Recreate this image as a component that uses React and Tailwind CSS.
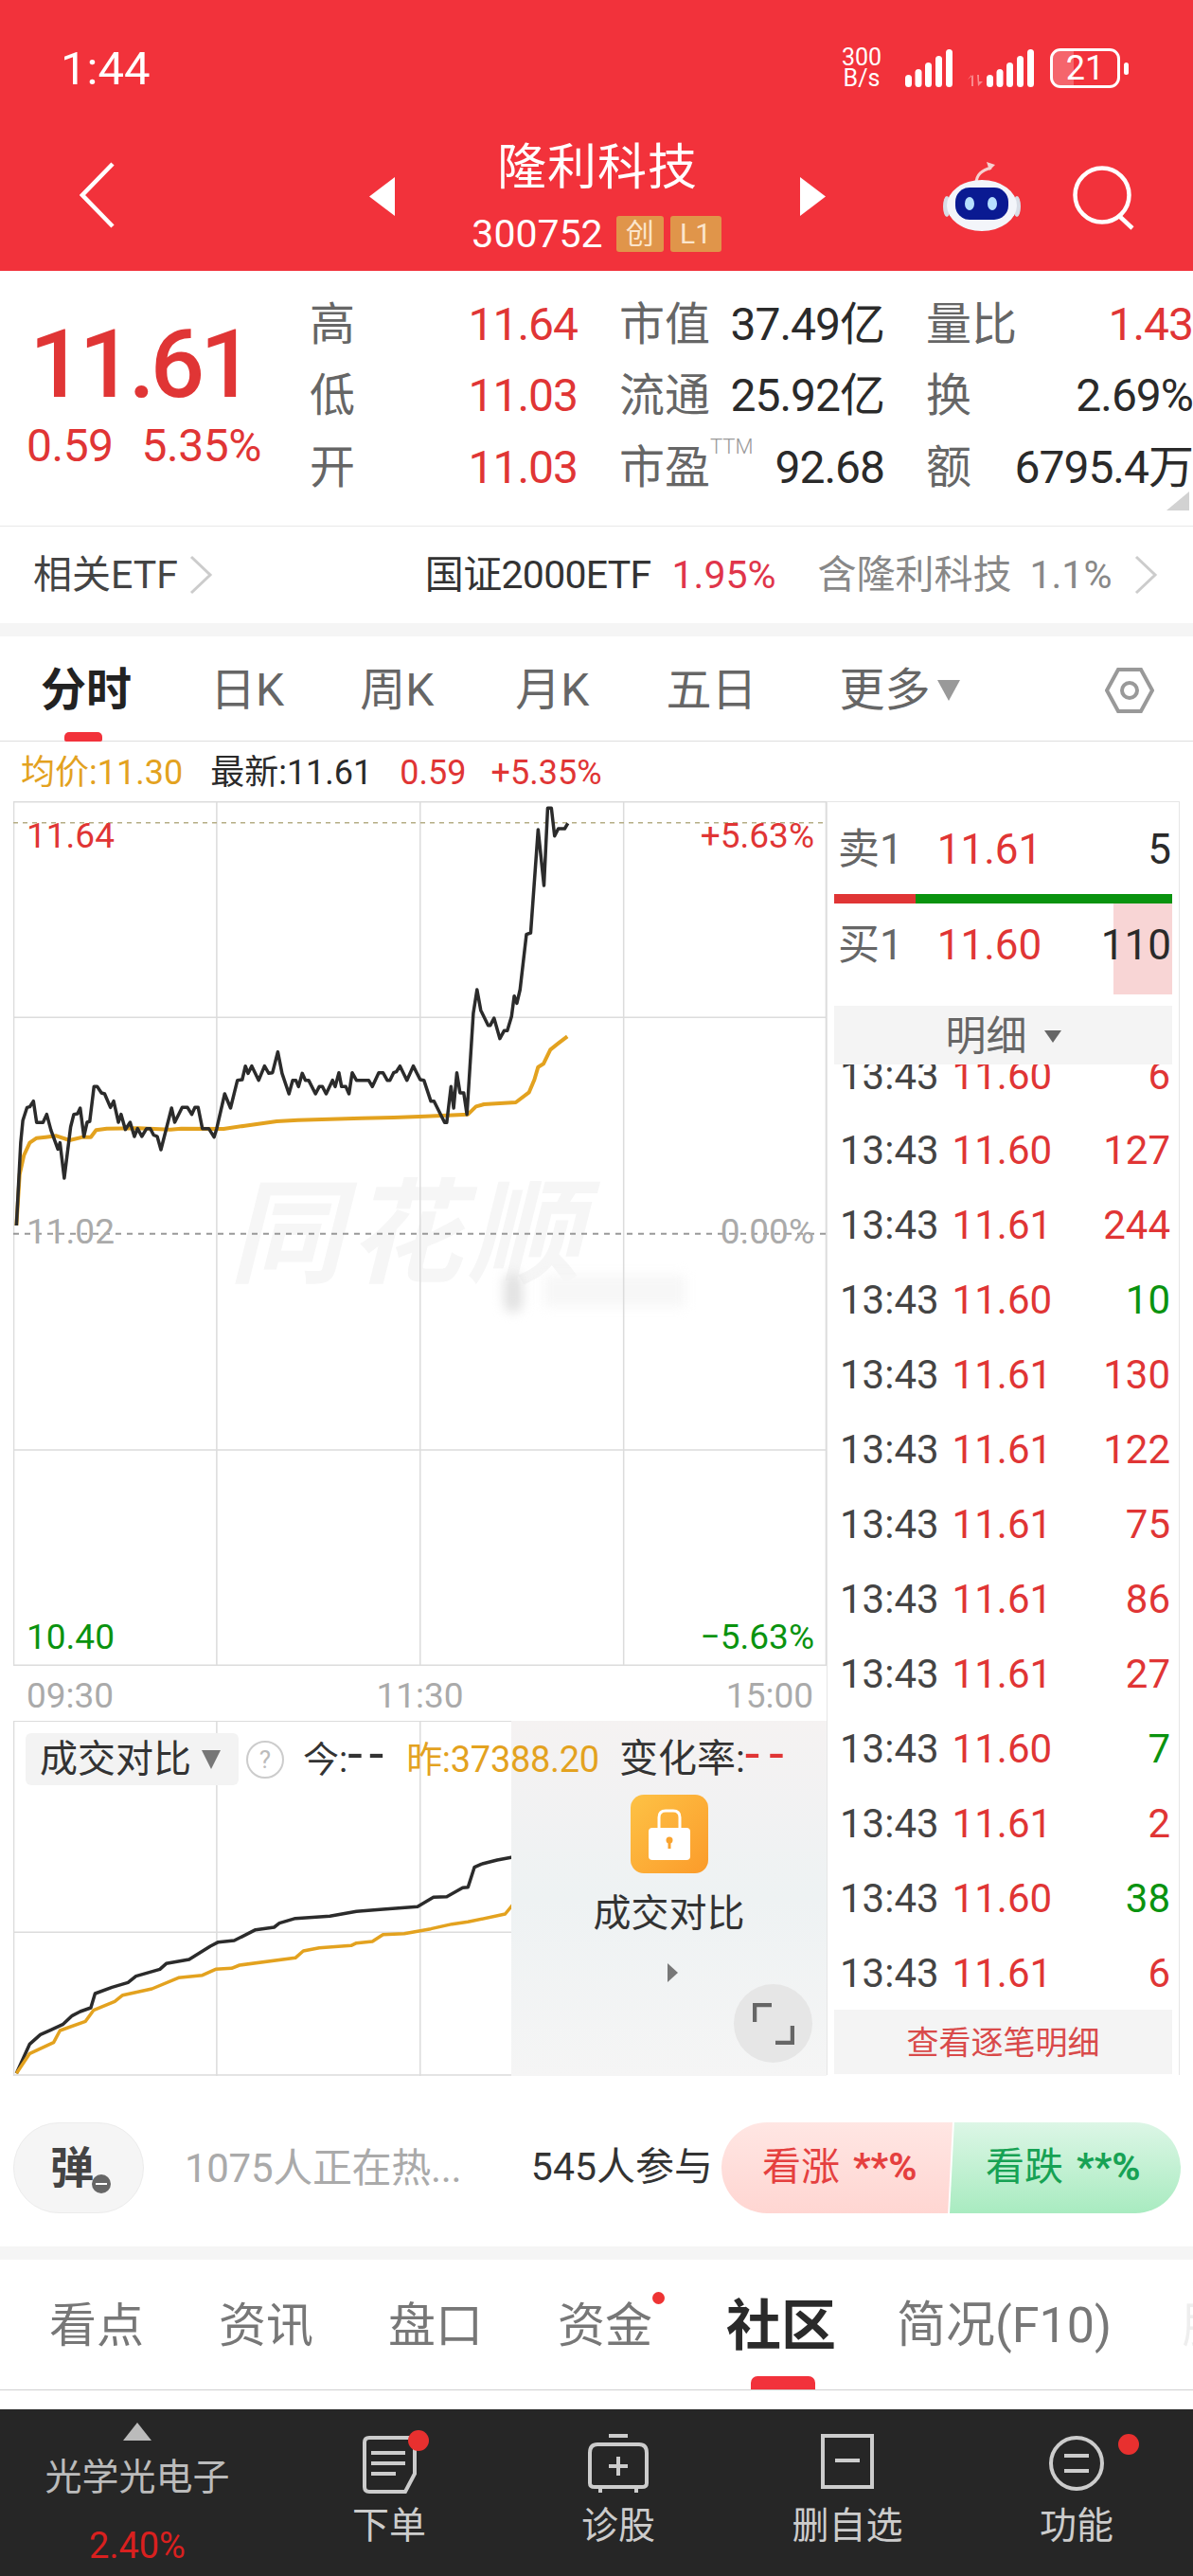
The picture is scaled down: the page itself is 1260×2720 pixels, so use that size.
import React from 'react'

const RED = 'text-[#e03535]'
const GREEN = 'text-[#0a930f]'

const blackLine = '30,1392 38,1130 42,1060 50,1018 55,1016 62,998 68,1066 80,1066 87,1040 95,1090 108,1150 112,1130 120,1242 132,1080 138,1040 145,1038 150,1020 157,1110 163,1065 168,1062 176,952 182,952 190,972 196,975 207,1018 213,998 222,1065 227,1040 235,1088 244,1065 252,1110 258,1085 266,1110 275,1085 282,1085 288,1105 295,1110 302,1152 322,1020 328,1065 342,1018 352,1018 360,1040 366,1018 372,1018 380,1085 392,1085 402,1112 407,1085 422,975 433,1020 446,932 455,930 461,887 466,910 473,887 486,932 497,887 505,910 512,908 522,842 530,910 543,975 550,932 556,932 561,952 568,910 574,932 580,932 593,975 600,952 606,952 613,975 625,932 630,952 637,908 642,952 650,952 656,975 662,908 670,932 693,932 700,952 712,908 720,908 728,932 733,932 740,908 745,905 752,887 765,932 777,887 790,930 797,932 810,998 816,998 836,1066 840,1066 848,952 853,1020 859,908 865,972 872,972 878,1040 890,720 897,645 904,710 918,758 922,758 929,735 940,800 948,775 954,775 962,730 967,665 972,688 978,645 990,470 998,465 1012,138 1023,315 1030,70 1037,70 1043,158 1050,135 1062,135 1068,118'
const goldLine = '30,1392 36,1230 44,1170 55,1130 68,1115 85,1112 105,1108 130,1122 155,1112 170,1112 180,1090 200,1085 260,1084 320,1088 340,1085 420,1086 460,1076 520,1062 560,1058 620,1055 680,1052 740,1050 800,1046 880,1040 895,1015 910,1008 970,1002 995,970 1005,930 1012,890 1022,880 1035,835 1050,815 1067,793'
const volBlack = '30,1408 55,1315 75,1285 95,1270 118,1252 135,1225 150,1212 170,1200 178,1155 210,1135 240,1120 255,1100 300,1078 312,1060 355,1047 395,1005 410,992 440,987 480,953 515,945 525,932 555,917 620,910 670,895 720,888 785,880 800,865 815,850 840,848 870,820 880,818 892,755 905,745 935,732 966,722'
const volGold = '30,1408 55,1345 100,1310 112,1272 160,1243 175,1208 215,1180 230,1160 285,1140 335,1105 380,1097 405,1078 435,1075 450,1065 555,1042 570,1020 600,1010 660,1003 670,995 700,990 720,968 760,965 810,950 850,935 880,928 950,903 966,870'

const quoteRows = [
  [['高', '11.64', RED], ['市值', '37.49亿', 'text-[#2a2a2a]'], ['量比', '1.43', RED]],
  [['低', '11.03', RED], ['流通', '25.92亿', 'text-[#2a2a2a]'], ['换', '2.69%', 'text-[#2a2a2a]']],
  [['开', '11.03', RED], ['市盈', '92.68', 'text-[#2a2a2a]'], ['额', '6795.4万', 'text-[#2a2a2a]']],
]

const ticks = [
  ['11.60', '6', RED],
  ['11.60', '127', RED],
  ['11.61', '244', RED],
  ['11.60', '10', GREEN],
  ['11.61', '130', RED],
  ['11.61', '122', RED],
  ['11.61', '75', RED],
  ['11.61', '86', RED],
  ['11.61', '27', RED],
  ['11.60', '7', GREEN],
  ['11.61', '2', RED],
  ['11.60', '38', GREEN],
  ['11.61', '6', RED],
]

function Bars({ className }) {
  return (
    <svg viewBox="0 0 50 40" className={className} fill="#fff">
      <rect x="0" y="27" width="7" height="13" rx="3.5" />
      <rect x="10.5" y="21" width="7" height="19" rx="3.5" />
      <rect x="21" y="14" width="7" height="26" rx="3.5" />
      <rect x="32" y="7" width="7" height="33" rx="3.5" />
      <rect x="43" y="0" width="7" height="40" rx="3.5" />
    </svg>
  )
}

function Chevron({ className }) {
  return (
    <svg viewBox="0 0 25 42" className={className} fill="none" stroke="#cccccc" strokeWidth="3">
      <path d="M2 2 L22 21 L2 40" />
    </svg>
  )
}

function Robot() {
  return (
    <svg viewBox="0 0 84 76" className="w-[84px] h-[76px] ml-[123px] mt-[24px]">
      <path d="M36 26 C36 16 42 12 52 9" stroke="#f6d0d0" strokeWidth="3" fill="none" />
      <path d="M47 3 L56 6 L50 12 Z" fill="#f6d0d0" />
      <ellipse cx="5" cy="50" rx="4" ry="11" fill="#d8dde6" />
      <ellipse cx="79" cy="50" rx="4" ry="11" fill="#d8dde6" />
      <ellipse cx="42" cy="49" rx="37" ry="27" fill="#f3f5fa" />
      <rect x="14" y="30" width="56" height="34" rx="15" fill="#0a1a92" />
      <ellipse cx="29" cy="47" rx="5" ry="7" fill="#b6e0ff" />
      <ellipse cx="53" cy="47" rx="5" ry="7" fill="#b6e0ff" />
    </svg>
  )
}

function Header() {
  return (
    <div className="bg-[#f2323b] h-[286px] flex flex-col text-white">
      <div className="h-[144px] flex items-center pl-[64px] pr-[68px]">
        <span className="text-[49px] leading-none">1:44</span>
        <div className="ml-auto flex items-center">
          <div className="w-[44px] text-[25px] leading-[22px] text-center">300<br />B/s</div>
          <Bars className="w-[50px] h-[40px] ml-[24px]" />
          <svg viewBox="0 0 17 12" className="w-[17px] h-[12px] ml-[16px] mt-[26px]" fill="#f98a8e">
            <path d="M0 5 L4 0 L4 12 L6 12 L6 0 Z M10 0 L12 0 L12 7 L16 7 L11 12 Z" />
          </svg>
          <Bars className="w-[50px] h-[40px] ml-[3px]" />
          <div className="w-[74px] h-[42px] ml-[17px] border-[3px] border-white rounded-[11px] relative flex items-center justify-center overflow-hidden">
            <div className="absolute left-0 top-0 bottom-0 w-[22px] bg-white/25" />
            <span className="text-[36px] leading-none relative">21</span>
          </div>
          <div className="w-[5px] h-[13px] ml-[4px] bg-white rounded-full" />
        </div>
      </div>
      <div className="flex-1 flex items-start pl-[84px]">
        <svg viewBox="0 0 37 70" className="w-[37px] h-[70px] mt-[27px]" fill="none" stroke="#fff" strokeWidth="4.5">
          <path d="M35 2 L3 35 L35 68" />
        </svg>
        <svg viewBox="0 0 27 41" className="w-[27px] h-[41px] ml-[269px] mt-[43px]" fill="#fff"><path d="M27 0 V41 L0 20.5 Z" /></svg>
        <div className="w-[428px] flex flex-col items-center">
          <div className="text-[52px] leading-[68px] h-[68px] tracking-[1px]">隆利科技</div>
          <div className="flex items-center h-[38px] mt-[16px] -ml-[2px]">
            <span className="text-[41px] leading-none">300752</span>
            <span className="ml-[14px] w-[50px] h-[38px] rounded-[3px] bg-[#e0954a] text-[#fbe5cc] text-[30px] leading-[38px] text-center">创</span>
            <span className="ml-[7px] w-[54px] h-[38px] rounded-[3px] bg-[#e0954a] text-[#fbe5cc] text-[30px] leading-[38px] text-center">L1</span>
          </div>
        </div>
        <svg viewBox="0 0 27 41" className="w-[27px] h-[41px] mt-[43px]" fill="#fff"><path d="M0 0 V41 L27 20.5 Z" /></svg>
        <Robot />
        <svg viewBox="0 0 66 68" className="w-[66px] h-[68px] ml-[54px] mt-[31px]" fill="none" stroke="#fff" strokeWidth="4.5">
          <circle cx="31" cy="31" r="28.5" />
          <path d="M49 53 L63 66" />
        </svg>
      </div>
    </div>
  )
}

function Quote() {
  return (
    <div className="h-[269px] flex relative">
      <div className="w-[327px] shrink-0 pl-[31px]">
        <div className={`${RED} text-[101px] leading-none tracking-[-5px] mt-[48px] font-medium`}>11.61</div>
        <div className={`${RED} text-[48px] leading-none mt-[12px] flex -ml-[3px] tracking-[-0.5px]`}>
          <span>0.59</span>
          <span className="ml-[30px]">5.35%</span>
        </div>
      </div>
      <div className="grid grid-cols-[283px_280px_282px] gap-x-[44px] auto-rows-[75.5px] pt-[19px]">
        {quoteRows.flat().map(([label, value, color]) => (
          <div key={label} className="flex items-center justify-between whitespace-nowrap">
            <span className="text-[48px] leading-none text-[#666]">
              {label}
              {label === '市盈' && <sup className="text-[22px] font-light text-[#999] align-[20px]">TTM</sup>}
            </span>
            <span className={`${color} text-[48px] leading-none tracking-[-1px]`}>{value}</span>
          </div>
        ))}
      </div>
      <svg viewBox="0 0 24 20" className="absolute right-[4px] bottom-[16px] w-[24px] h-[20px]" fill="#d2d2d2"><path d="M24 0 V20 H0 Z" /></svg>
    </div>
  )
}

function EtfRow() {
  return (
    <div className="h-[103px] border-t border-[#e8e8e8] flex items-center pl-[35px] text-[41px] leading-none whitespace-nowrap">
      <span className="text-[#444]">相关ETF</span>
      <Chevron className="w-[25px] h-[42px] ml-[12px]" />
      <span className="text-[#333] ml-[224px] tracking-[-0.7px]">国证2000ETF</span>
      <span className="text-[#e0354a] ml-[22px]">1.95%</span>
      <span className="text-[#888] ml-[44px]">含隆利科技</span>
      <span className="text-[#888] ml-[19px]">1.1%</span>
      <Chevron className="w-[25px] h-[42px] ml-[24px]" />
    </div>
  )
}

function ChartTabs() {
  return (
    <div className="h-[111px] border-b-[1.5px] border-[#dedede] flex items-center text-[48px] leading-none text-[#666] relative pt-[3px]">
      <span className="ml-[43px] font-bold text-[#222]">分时</span>
      <span className="ml-[83px]">日K</span>
      <span className="ml-[80px]">周K</span>
      <span className="ml-[86px]">月K</span>
      <span className="ml-[81px]">五日</span>
      <span className="ml-[87px]">更多</span>
      <svg viewBox="0 0 24 22" className="w-[24px] h-[22px] ml-[8px]" fill="#999"><path d="M0 0 H24 L12 22 Z" /></svg>
      <svg viewBox="0 0 52 50" className="w-[52px] h-[50px] ml-[153px]" fill="none" stroke="#999" strokeWidth="4">
        <path d="M14 3 H38 L50 25 L38 47 H14 L2 25 Z" />
        <circle cx="26" cy="25" r="8" />
      </svg>
      <div className="absolute left-[68px] -bottom-[1px] w-[40px] h-[10px] rounded-t-[5px] rounded-b-[2px] bg-[#f2323b]" />
    </div>
  )
}

function InfoRow() {
  return (
    <div className="h-[63px] flex items-center pl-[22px] pt-[3px] text-[36px] leading-none whitespace-nowrap">
      <span className="text-[#e3a21f]">均价:11.30</span>
      <span className="text-[#2a2a2a] ml-[29px]">最新:11.61</span>
      <span className={`${RED} ml-[29px]`}>0.59</span>
      <span className={`${RED} ml-[26px]`}>+5.35%</span>
    </div>
  )
}

function PriceChart() {
  const label = 'absolute text-[37px] leading-none'
  return (
    <div className="relative h-[913px] overflow-hidden">
      <div className="absolute left-[228px] top-[398px] text-[#f6f6f6] text-[120px] leading-none font-bold italic tracking-[6px]">同花顺</div>
      <div className="absolute left-[518px] top-[498px] w-[20px] h-[42px] rounded-full bg-[#e2e2e2] blur-[6px]" />
      <div className="absolute left-[560px] top-[500px] w-[150px] h-[34px] bg-[#f7f7f7] blur-[6px]" />
      <svg viewBox="24 48 1531 2739" preserveAspectRatio="none" className="absolute inset-0 w-full h-full" fill="none">
        <path vectorEffect="non-scaling-stroke" d="M25 48 V2787 M407 48 V2787 M790 48 V2787 M1173 48 V2787 M1554 48 V2787 M24 50 H1555 M24 733 H1555 M24 2103 H1555 M24 2785 H1555" stroke="#dcdcdc" strokeWidth="1.5" />
        <path vectorEffect="non-scaling-stroke" d="M24 116 H1555" stroke="#b5ad85" strokeWidth="1.5" strokeDasharray="5 5" />
        <path vectorEffect="non-scaling-stroke" d="M24 1418 H1555" stroke="#999" strokeWidth="2" strokeDasharray="6 6" />
        <polyline vectorEffect="non-scaling-stroke" points={goldLine} stroke="#e3a21f" strokeWidth="4" strokeLinejoin="round" />
        <polyline vectorEffect="non-scaling-stroke" points={blackLine} stroke="#2b2b2b" strokeWidth="3.5" strokeLinejoin="round" />
      </svg>
      <span className={`${label} ${RED} left-[14px] top-[18px]`}>11.64</span>
      <span className={`${label} ${RED} right-[13px] top-[18px]`}>+5.63%</span>
      <span className={`${label} text-[#aaa] left-[14px] top-[436px]`}>11.02</span>
      <span className={`${label} text-[#aaa] right-[13px] top-[436px]`}>0.00%</span>
      <span className={`${label} ${GREEN} left-[14px] top-[864px]`}>10.40</span>
      <span className={`${label} ${GREEN} right-[13px] top-[864px]`}>−5.63%</span>
    </div>
  )
}

function VolumeChart() {
  return (
    <div className="relative h-[375px] overflow-hidden">
      <svg viewBox="24 291 1531 1125" preserveAspectRatio="none" className="absolute inset-0 w-full h-full" fill="none">
        <path vectorEffect="non-scaling-stroke" d="M25 291 V1416 M407 291 V1416 M790 291 V1416 M24 292 H966 M24 961 H966 M24 1413 H966" stroke="#dcdcdc" strokeWidth="1.5" />
        <polyline vectorEffect="non-scaling-stroke" points={volBlack} stroke="#2b2b2b" strokeWidth="3.5" strokeLinejoin="round" />
        <polyline vectorEffect="non-scaling-stroke" points={volGold} stroke="#e3a21f" strokeWidth="3.5" strokeLinejoin="round" />
      </svg>
      <div className="absolute right-0 top-0 bottom-0 w-[333px] bg-gradient-to-b from-[#f5f2f2] via-[#eef2f3] to-[#f5f5f5] flex flex-col items-center pt-[78px] text-[#333]">
        <div className="w-[82px] h-[83px] rounded-[14px] bg-gradient-to-br from-[#fdc245] to-[#fb9b2a] flex items-center justify-center">
          <svg viewBox="0 0 46 56" className="w-[46px] h-[56px]">
            <path d="M12 24 V10 Q12 3 19 3 H27 Q34 3 34 10 V24" fill="none" stroke="#fff" strokeWidth="3" />
            <rect x="1" y="21" width="44" height="34" rx="4" fill="#fff" />
            <circle cx="23" cy="34" r="3.5" fill="#f9a32e" />
            <rect x="21.5" y="35" width="3" height="8" fill="#f9a32e" />
          </svg>
        </div>
        <div className="text-[40px] leading-none mt-[23px]">成交对比</div>
        <svg viewBox="0 0 11 20" className="w-[11px] h-[20px] mt-[32px] ml-[7px]" fill="#777"><path d="M0 0 L11 10 L0 20 Z" /></svg>
        <div className="absolute right-[15px] top-[278px] w-[83px] h-[83px] rounded-full bg-[#e6e6e6] flex items-center justify-center">
          <svg viewBox="0 0 44 44" className="w-[44px] h-[44px]" fill="none" stroke="#666" strokeWidth="4.5">
            <path d="M2 20 V2 H20 M42 24 V42 H24" />
          </svg>
        </div>
      </div>
      <div className="relative flex items-center h-[55px] mt-[13px] ml-[13px] text-[38px] leading-none whitespace-nowrap text-[#333]">
        <div className="w-[225px] h-[55px] rounded-[6px] bg-[#f3f3f3] flex items-center pl-[15px]">
          <span className="text-[40px]">成交对比</span>
          <svg viewBox="0 0 20 20" className="w-[20px] h-[20px] ml-[11px]" fill="#777"><path d="M0 0 H20 L10 20 Z" /></svg>
        </div>
        <div className="w-[40px] h-[40px] ml-[8px] rounded-full border-[2px] border-[#ccc] text-[#bbb] text-[26px] flex items-center justify-center">?</div>
        <span className="ml-[20px]">今:<span className="text-[56px] leading-[0] tracking-[7px]">--</span></span>
        <span className="ml-[17px] text-[#e3a21f] tracking-[-0.3px]">昨:37388.20</span>
        <span className="ml-[21px] text-[41px]">变化率:<span className="text-[56px] leading-[0] tracking-[10px] text-[#e03535]">--</span></span>
      </div>
    </div>
  )
}

function RightPanel() {
  return (
    <div className="w-[373px] shrink-0 h-[1345px] border-x-[1.5px] border-t-[1.5px] border-b-0 border-[#e6e6e6] flex flex-col text-[42px] leading-none">
      <div className="h-[97px] flex items-center pl-[11px] pr-[8px] pt-[3px] text-[44px]">
        <span className="text-[#666]">卖1</span>
        <span className={`${RED} ml-[36px]`}>11.61</span>
        <span className="ml-auto text-[#2a2a2a]">5</span>
      </div>
      <div className="h-[10px] mx-[7px] flex">
        <div className="w-[86px] bg-[#e03535]" />
        <div className="flex-1 bg-[#0a930f]" />
      </div>
      <div className="h-[96px] mx-[7px] relative flex items-center pl-[4px] pr-[1px] pb-[8px] text-[44px]">
        <div className="absolute right-0 top-0 bottom-0 w-[62px] bg-[#f8d5d5]" />
        <span className="text-[#666] relative">买1</span>
        <span className={`${RED} ml-[36px] relative`}>11.60</span>
        <span className="ml-auto text-[#2a2a2a] relative">110</span>
      </div>
      <div className="h-[62px] mx-[7px] mt-[12px] pt-[3px] bg-[#f4f4f4] flex items-center justify-center text-[#666] shrink-0">
        <span className="text-[43px]">明细</span>
        <svg viewBox="0 0 18 13" className="w-[18px] h-[13px] ml-[18px]" fill="#666"><path d="M0 0 H18 L9 13 Z" /></svg>
      </div>
      <div className="h-[998px] overflow-hidden">
        <div className="-mt-[28px]">
          {ticks.map(([price, qty, color], i) => (
            <div key={i} className="h-[79px] flex items-center pl-[13px] pr-[9px]">
              <span className="text-[#444]">13:43</span>
              <span className={`${RED} ml-[14px]`}>{price}</span>
              <span className={`${color} ml-auto`}>{qty}</span>
            </div>
          ))}
        </div>
      </div>
      <div className="h-[68px] mx-[7px] bg-[#f4f4f4] text-[#d94a4a] text-[34px] pt-[2px] flex items-center justify-center shrink-0">查看逐笔明细</div>
    </div>
  )
}

function Poll() {
  return (
    <div className="h-[96px] mt-[49px] flex items-center whitespace-nowrap">
      <div className="ml-[14px] w-[138px] h-[96px] rounded-[48px] bg-[#f5f5f5] border border-[#ececec] flex items-center justify-center relative">
        <span className="text-[46px] leading-none font-bold text-[#444] -ml-[14px]">弹</span>
        <span className="absolute left-[82px] top-[54px] w-[20px] h-[20px] rounded-full bg-[#666] flex items-center justify-center">
          <span className="w-[12px] h-[2.5px] bg-white" />
        </span>
      </div>
      <span className="ml-[43px] text-[42px] text-[#aaa] tracking-[-0.3px]">1075人正在热...</span>
      <span className="ml-auto text-[41px] text-[#333]">545人参与</span>
      <div className="ml-[9px] mr-[13px] w-[485px] h-[96px] flex">
        <div className="w-[245px] h-[96px] rounded-l-[48px] bg-gradient-to-b from-[#ffe6e3] to-[#ffd6d2] [clip-path:polygon(0_0,100%_0,98%_100%,0_100%)] flex items-center pl-[43px] text-[41px] text-[#e5403f]">
          看涨<span className="ml-[14px] font-bold">**%</span>
        </div>
        <div className="w-[245px] h-[96px] -ml-[3px] rounded-r-[48px] bg-gradient-to-b from-[#dcf6e6] to-[#a8ebc0] [clip-path:polygon(2%_0,100%_0,100%_100%,0_100%)] flex items-center pl-[38px] text-[41px] text-[#17a254]">
          看跌<span className="ml-[14px] font-bold">**%</span>
        </div>
      </div>
    </div>
  )
}

function SectionTabs() {
  return (
    <div className="h-[138px] pt-[3px] border-b-[1.5px] border-[#cfcfcf] flex items-center text-[50px] leading-none text-[#777] relative whitespace-nowrap overflow-hidden">
      <span className="ml-[52px]">看点</span>
      <span className="ml-[79px]">资讯</span>
      <span className="ml-[79px]">盘口</span>
      <span className="ml-[79px]">资金</span>
      <span className="ml-[78px] text-[58px] font-bold text-[#2a2a2a]">社区</span>
      <span className="ml-[64px] text-[52px]">简况(F10)</span>
      <span className="ml-[74px] text-[#eeeeee]">股</span>
      <div className="absolute left-[689px] top-[34px] w-[13px] h-[13px] rounded-full bg-[#e33]" />
      <div className="absolute left-[793px] bottom-0 w-[68px] h-[14px] rounded-t-[7px] bg-[#f2323b]" />
    </div>
  )
}

function BottomBar() {
  const dot = 'absolute w-[22px] h-[22px] rounded-full bg-[#e8302f]'
  const label = 'text-[39px] leading-none text-[#ccc] mt-[14px]'
  const item = 'flex flex-col items-center w-[242px] relative pt-[26px]'
  return (
    <div className="h-[176px] mt-[20px] bg-[#262626] flex">
      <div className="w-[290px] shrink-0 flex flex-col items-center pt-[14px]">
        <svg viewBox="0 0 30 19" className="w-[30px] h-[19px]" fill="#bbb"><path d="M15 0 L30 19 H0 Z" /></svg>
        <div className="text-[39px] leading-none text-[#bbb] mt-[20px]">光学光电子</div>
        <div className="text-[38px] leading-none text-[#d9201f] mt-[33px]">2.40%</div>
      </div>
      <div className={item}>
        <svg viewBox="0 0 58 64" className="w-[58px] h-[64px]" fill="none" stroke="#ccc" strokeWidth="4">
          <path d="M56 4 H8 Q3 4 3 9 V56 Q3 61 8 61 H46 L56 42 Z M10 20 H46 M10 31 H46 M10 42 H36" />
        </svg>
        <span className={`${dot} left-[141px] top-[22px]`} />
        <div className={label}>下单</div>
      </div>
      <div className={item}>
        <svg viewBox="0 0 66 64" className="w-[66px] h-[64px]" fill="none" stroke="#ccc" strokeWidth="4">
          <path d="M23 2 H43 M3 20 Q3 11 11 11 H55 Q63 11 63 20 V52 Q63 56 58 56 H8 Q3 56 3 52 Z M33 24 V44 M23 34 H43 M14 56 V62 M52 56 V62" />
        </svg>
        <div className={label}>诊股</div>
      </div>
      <div className={item}>
        <svg viewBox="0 0 56 58" className="w-[56px] h-[58px] mb-[6px]" fill="none" stroke="#ccc" strokeWidth="4">
          <path d="M2 2 H54 V56 H2 Z M15 28 H41" />
        </svg>
        <div className={label}>删自选</div>
      </div>
      <div className={item}>
        <svg viewBox="0 0 60 62" className="w-[60px] h-[62px] mb-[2px]" fill="none" stroke="#ccc" strokeWidth="4">
          <circle cx="30" cy="31" r="27" />
          <path d="M17 23 H43 M17 39 H43" />
        </svg>
        <span className={`${dot} left-[165px] top-[26px]`} />
        <div className={label}>功能</div>
      </div>
    </div>
  )
}

export default function App() {
  return (
    <div className="w-[1260px] h-[2720px] overflow-hidden bg-white font-['Roboto','Noto_Sans_CJK_SC',sans-serif]">
      <Header />
      <Quote />
      <EtfRow />
      <div className="h-[14px] bg-[#f5f5f5]" />
      <ChartTabs />
      <InfoRow />
      <div className="flex pl-[14px]">
        <div className="w-[859px] shrink-0">
          <PriceChart />
          <div className="h-[58px] flex items-center justify-between px-[14px] pt-[4px] text-[37px] leading-none text-[#aaa]">
            <span>09:30</span>
            <span>11:30</span>
            <span>15:00</span>
          </div>
          <VolumeChart />
        </div>
        <RightPanel />
      </div>
      <Poll />
      <div className="h-[14px] mt-[35px] bg-[#f5f5f5]" />
      <SectionTabs />
      <BottomBar />
    </div>
  )
}
